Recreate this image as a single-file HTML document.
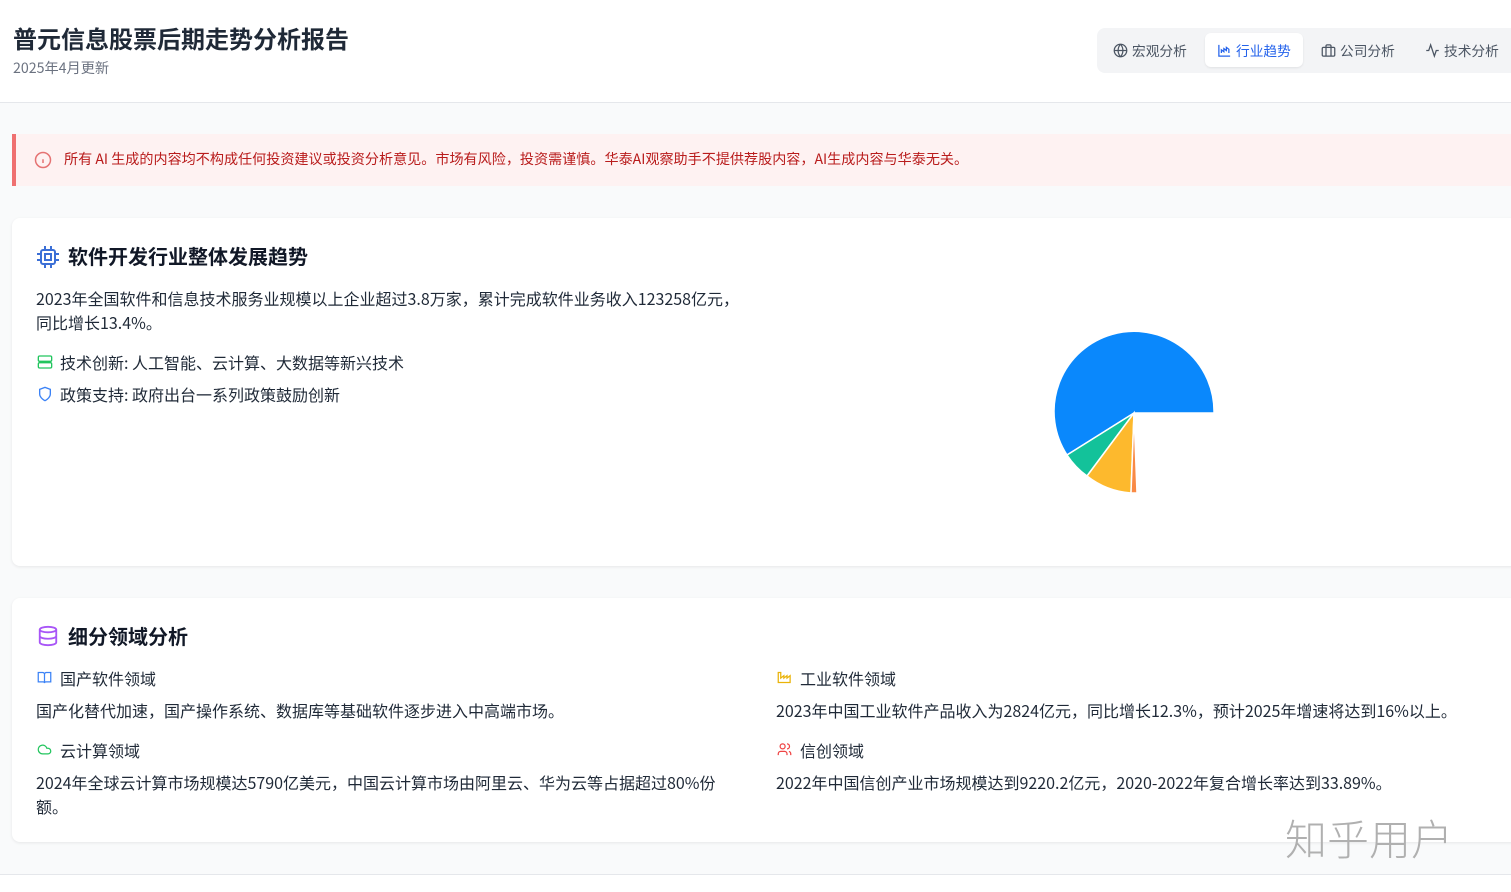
<!DOCTYPE html>
<html><head><meta charset="utf-8"><style>
*{margin:0;padding:0;box-sizing:border-box}
body{width:1511px;height:892px;overflow:hidden;background:#f9fafb;font-family:"Noto Sans CJK SC","Liberation Sans",sans-serif;color:#1f2937;position:relative}
.hdr{position:absolute;left:0;top:0;width:1511px;height:103px;background:#fff;border-bottom:1px solid #e5e7eb}
.hdr h1{position:absolute;left:13px;top:22px;font-size:24px;line-height:32px;font-weight:bold;color:#1f2937}
.hdr .sub{position:absolute;left:13px;top:58px;font-size:14.2px;line-height:20px;color:#6b7280}
.tabs{position:absolute;left:1097px;top:28px;width:430px;height:45px;background:#f3f4f6;border-radius:8px}
.tab{position:absolute;top:5px;height:34px;line-height:34px;font-size:13.7px;color:#4b5563;display:flex;align-items:center;gap:4px}
.tab.act{background:#fff;border-radius:6px;color:#2563eb;box-shadow:0 1px 2px rgba(0,0,0,.08);padding:0 12px}
.alert{position:absolute;left:12px;top:134px;width:1510px;height:52px;background:#fef2f2;border-left:4px solid #ef7070}
.alert span{position:absolute;left:48px;top:15px;font-size:14.1px;line-height:20px;color:#b91c1c}
.card{position:absolute;left:12px;width:1510px;background:#fff;border-radius:8px;box-shadow:0 1px 3px rgba(0,0,0,.08)}
.t{position:absolute;font-size:16px;line-height:20px;color:#1f2937;white-space:nowrap}
.h2{position:absolute;font-size:20px;line-height:26px;font-weight:bold;color:#111827}
svg{position:absolute}
</style></head><body>
<div class="hdr">
<h1>普元信息股票后期走势分析报告</h1>
<div class="sub">2025年4月更新</div>
<div class="tabs">
<div class="tab" style="left:16px"><svg style="position:static" width="15" height="15" viewBox="0 0 24 24" fill="none" stroke="#4b5563" stroke-width="2"><circle cx="12" cy="12" r="10"/><path d="M2 12h20M12 2a15 15 0 0 1 0 20M12 2a15 15 0 0 0 0 20"/></svg>宏观分析</div>
<div class="tab act" style="left:108px"><svg style="position:static" width="15" height="15" viewBox="0 0 24 24" fill="none" stroke="#2563eb" stroke-width="2"><path d="M3 3v18h18M7 16v-5l4 3V9l4 3V7l4 3v6"/></svg>行业趋势</div>
<div class="tab" style="left:224px"><svg style="position:static" width="15" height="15" viewBox="0 0 24 24" fill="none" stroke="#4b5563" stroke-width="2"><rect x="2" y="7" width="20" height="14" rx="2"/><path d="M16 21V5a2 2 0 0 0-2-2h-4a2 2 0 0 0-2 2v16"/></svg>公司分析</div>
<div class="tab" style="left:328px"><svg style="position:static" width="15" height="15" viewBox="0 0 24 24" fill="none" stroke="#4b5563" stroke-width="2"><path d="M22 12h-4l-3 9L9 3l-3 9H2"/></svg>技术分析</div>
</div>
</div>
<div class="alert"><svg style="left:18px;top:17px" width="18" height="18" viewBox="0 0 24 24" fill="none" stroke="#e57373" stroke-width="2"><circle cx="12" cy="12" r="10"/><path d="M12 16v-5M12 8h.01"/></svg><span>所有 AI 生成的内容均不构成任何投资建议或投资分析意见。市场有风险，投资需谨慎。华泰AI观察助手不提供荐股内容，AI生成内容与华泰无关。</span></div>

<div class="card" style="top:218px;height:348px">
<svg style="left:24px;top:27px" width="24" height="24" viewBox="0 0 24 24" fill="none" stroke="#3b6fd6" stroke-width="2"><rect x="5" y="5" width="14" height="14" rx="2"/><rect x="9" y="9" width="6" height="6"/><path d="M9 1v4M15 1v4M9 19v4M15 19v4M1 9h4M1 15h4M19 9h4M19 15h4"/></svg>
<div class="h2" style="left:56px;top:25px">软件开发行业整体发展趋势</div>
<div class="t" style="left:24px;top:70px">2023年全国软件和信息技术服务业规模以上企业超过3.8万家，累计完成软件业务收入123258亿元，</div>
<div class="t" style="left:24px;top:94px">同比增长13.4%。</div>
<svg style="left:25px;top:136px" width="16" height="16" viewBox="0 0 24 24" fill="none" stroke="#22c55e" stroke-width="2"><rect x="2" y="3" width="20" height="8" rx="2"/><rect x="2" y="13" width="20" height="8" rx="2"/></svg>
<div class="t" style="left:48px;top:134px">技术创新: 人工智能、云计算、大数据等新兴技术</div>
<svg style="left:25px;top:168px" width="16" height="16" viewBox="0 0 24 24" fill="none" stroke="#3b82f6" stroke-width="2"><path d="M12 22s8-4 8-10V5l-8-3-8 3v7c0 6 8 10 8 10z"/></svg>
<div class="t" style="left:48px;top:166px">政策支持: 政府出台一系列政策鼓励创新</div>
</div>
<svg style="left:0;top:0" width="1511" height="892" viewBox="0 0 1511 892">
<g stroke="#fff" stroke-width="1.5">
<path d="M1134 413 L1214 413 A80 80 0 1 0 1067 455 Z" fill="#0a88fc"/>
<path d="M1134 413 L1067 455 A80 80 0 0 0 1087 476 Z" fill="#13c29a"/>
<path d="M1134 413 L1087 476 A80 80 0 0 0 1131 493 Z" fill="#fdb92d"/>
<path d="M1134 413 L1131 493 A80 80 0 0 0 1137 493 Z" fill="#f98a45"/>
</g></svg>

<div class="card" style="top:598px;height:244px">
<svg style="left:25px;top:26px" width="22" height="24" viewBox="0 0 24 24" fill="none" stroke="#a855f7" stroke-width="2"><ellipse cx="12" cy="5" rx="9" ry="3"/><path d="M3 5v14c0 1.7 4 3 9 3s9-1.3 9-3V5M3 12c0 1.7 4 3 9 3s9-1.3 9-3"/></svg>
<div class="h2" style="left:56px;top:25px">细分领域分析</div>
<svg style="left:25px;top:72px" width="15" height="15" viewBox="0 0 24 24" fill="none" stroke="#3b82f6" stroke-width="2"><path d="M2 4h7a3 3 0 0 1 3 3v14a2 2 0 0 0-2-2H2zM22 4h-7a3 3 0 0 0-3 3v14a2 2 0 0 1 2-2h8z"/></svg>
<div class="t" style="left:48px;top:70px">国产软件领域</div>
<div class="t" style="left:24px;top:102px">国产化替代加速，国产操作系统、数据库等基础软件逐步进入中高端市场。</div>
<svg style="left:25px;top:144px" width="15" height="15" viewBox="0 0 24 24" fill="none" stroke="#22c55e" stroke-width="2"><path d="M17.5 19H9a7 7 0 1 1 6.7-9h1.8a4.5 4.5 0 1 1 0 9z"/></svg>
<div class="t" style="left:48px;top:142px">云计算领域</div>
<div class="t" style="left:24px;top:174px">2024年全球云计算市场规模达5790亿美元，中国云计算市场由阿里云、华为云等占据超过80%份</div>
<div class="t" style="left:24px;top:198px">额。</div>
<svg style="left:765px;top:72px" width="15" height="15" viewBox="0 0 24 24" fill="none" stroke="#eab308" stroke-width="2"><path d="M2 20V4h4v9l5-4v4l5-4v4l5-4v11z"/></svg>
<div class="t" style="left:788px;top:70px">工业软件领域</div>
<div class="t" style="left:764px;top:102px">2023年中国工业软件产品收入为2824亿元，同比增长12.3%，预计2025年增速将达到16%以上。</div>
<svg style="left:765px;top:144px" width="15" height="15" viewBox="0 0 24 24" fill="none" stroke="#ef4444" stroke-width="2"><circle cx="9" cy="7" r="4"/><path d="M2 21v-2a4 4 0 0 1 4-4h6a4 4 0 0 1 4 4v2M16 3a4 4 0 0 1 0 8M22 21v-2a4 4 0 0 0-3-3.9"/></svg>
<div class="t" style="left:788px;top:142px">信创领域</div>
<div class="t" style="left:764px;top:174px">2022年中国信创产业市场规模达到9220.2亿元，2020-2022年复合增长率达到33.89%。</div>
</div>
<div style="position:absolute;left:0;top:874px;width:1511px;height:18px;background:#fff;border-top:1px solid #e5e7eb"></div>
<div style="position:absolute;left:1285px;top:813px;font-size:42px;line-height:50px;color:#b0b0b0;letter-spacing:0px;font-family:'Noto Sans CJK SC',sans-serif;font-weight:300">知乎用户</div>
</body></html>
